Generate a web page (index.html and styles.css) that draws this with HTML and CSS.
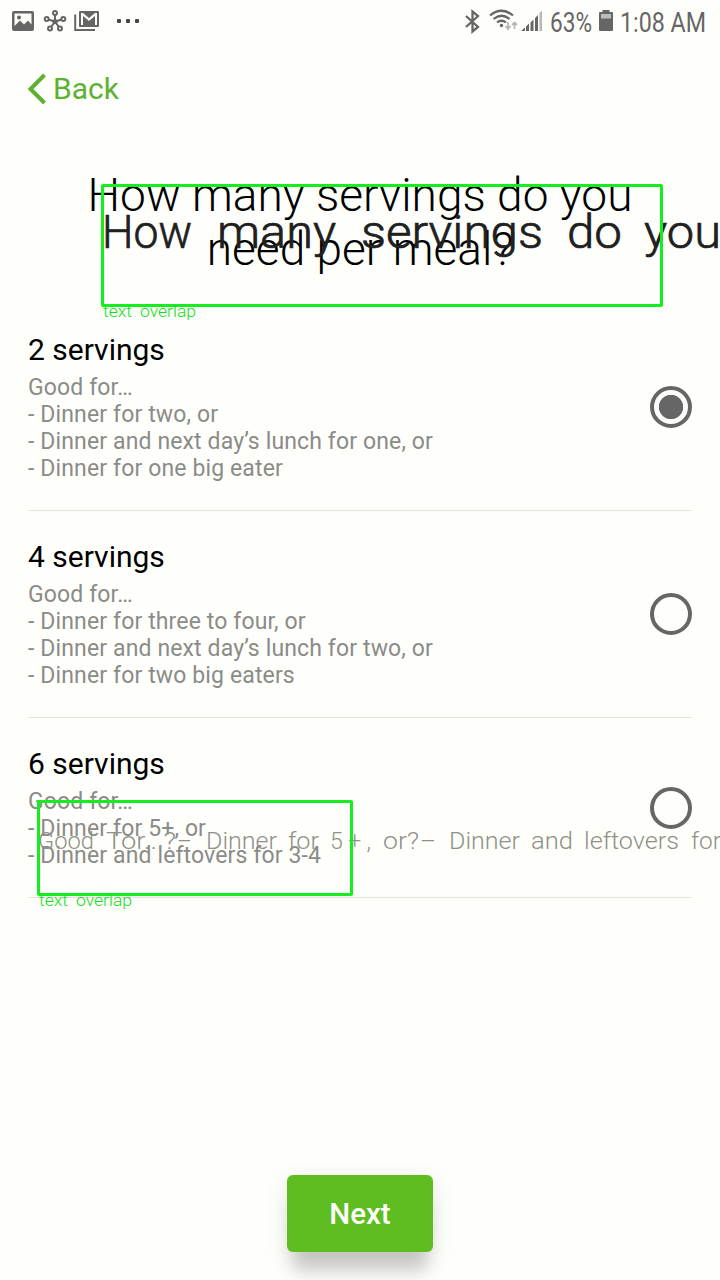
FILE: index.html
```html
<!DOCTYPE html>
<html lang="en">
<head>
<meta charset="utf-8">
<title>Servings</title>
<link rel="stylesheet" href="styles.css">
</head>
<body>
<main class="screen">
  <header class="status">
    <svg class="status-left" width="150" height="44" viewBox="0 0 150 44">
      <path fill="#666" fill-rule="evenodd" d="M14 11H32Q34 11 34 13V29Q34 31 32 31H14Q12 31 12 29V13Q12 11 14 11ZM14.500 13.500V26L20 20.500L24 24.500L28 20.500L31.500 24.500V13.500Z"/>
      <circle cx="19" cy="17.500" r="2" fill="#666"/>
      <g fill="none" stroke="#666" stroke-width="2">
        <path d="M55 15V20M48.500 19.500L53 21M61.500 19.500L57 21M51.200 26.800L54 23M58.800 26.800L56 23"/>
        <circle cx="55" cy="13" r="2"/><circle cx="46.700" cy="19" r="2"/><circle cx="63.300" cy="19" r="2"/><circle cx="50" cy="28.500" r="2"/><circle cx="60" cy="28.500" r="2"/>
        <path d="M75.200 14.500V30H95"/>
      </g>
      <circle cx="55" cy="21.500" r="2.600" fill="#666"/>
      <path fill="#666" fill-rule="evenodd" d="M80 11H98Q99 11 99 12V26Q99 27 98 27H80Q79 27 79 26V12Q79 11 80 11ZM81 13V25H83V16.500L89 21.500L95 16.500V25H97V13H95L89 18L83 13Z"/>
      <path fill="#666" d="M83 16L89 21L95 16V25.500H83Z"/>
      <g fill="#444"><rect x="117" y="19" width="4" height="4" rx="1"/><rect x="126" y="19" width="4" height="4" rx="1"/><rect x="135" y="19" width="4" height="4" rx="1"/></g>
    </svg>
    <svg class="status-right" width="260" height="44" viewBox="460 0 260 44">
      <path d="M466 16L478 27L472.500 31.500V11.500L478 16L466 27" fill="none" stroke="#666" stroke-width="2.300"/>
      <g fill="none" stroke="#666" stroke-width="2.200">
        <path d="M490 15.500Q501.500 6 513 15.500M493.500 19Q501.500 12.500 509.500 19M497 22.500Q501.500 19 506 22.500"/>
      </g>
      <circle cx="501.500" cy="25.500" r="1.700" fill="#666"/>
      <path d="M508 22V28M505.500 26L508 29L510.500 26M514.500 29V23M512 25L514.500 22.500L517 25" fill="none" stroke="#b8b8b5" stroke-width="1.800"/>
      <path fill="#666" d="M521 31L525 27.500V31ZM526 26.500L529 23.500V31H526ZM530.500 22.500L533.500 19.500V31H530.500ZM535 18L538 15V31H535Z"/>
      <path fill="#b8b8b5" d="M539.500 13L542 10.500V31H539.500Z"/>
      <text class="status-text" x="550" y="31.500" textLength="42" lengthAdjust="spacingAndGlyphs">63%</text>
      <path fill="#666" d="M602.500 10H609.500V12H612Q613 12 613 13V30Q613 31 612 31H600Q599 31 599 30V13Q599 12 600 12H602.500Z"/>
      <rect x="601" y="14" width="10" height="4.500" fill="#bdbdb9"/>
      <text class="status-text" x="620" y="31.500" textLength="86" lengthAdjust="spacingAndGlyphs">1:08 AM</text>
    </svg>
  </header>

  <nav class="back">
    <svg width="20" height="32" viewBox="0 0 20 32"><path d="M17.500 2L3.500 16L17.500 30" fill="none" stroke="#5db133" stroke-width="4"/></svg>
    <span class="back-label">Back</span>
  </nav>

  <h1 class="title">How many servings do you<br>need per meal?</h1>

  <section class="options">
    <div class="option">
      <div>
        <h2 class="option-name">2 servings</h2>
        <p class="option-info">Good for…<br>- Dinner for two, or<br>- Dinner and next day’s lunch for one, or<br>- Dinner for one big eater</p>
      </div>
      <span class="radio radio-on"></span>
    </div>
    <div class="option">
      <div>
        <h2 class="option-name">4 servings</h2>
        <p class="option-info">Good for…<br>- Dinner for three to four, or<br>- Dinner and next day’s lunch for two, or<br>- Dinner for two big eaters</p>
      </div>
      <span class="radio"></span>
    </div>
    <div class="option">
      <div>
        <h2 class="option-name">6 servings</h2>
        <p class="option-info">Good for…<br>- Dinner for 5+, or<br>- Dinner and leftovers for 3-4</p>
      </div>
      <span class="radio"></span>
    </div>
  </section>

  <footer class="footer"><button class="next">Next</button></footer>

  <svg class="annotations" width="720" height="1280" viewBox="0 0 720 1280">
    <g class="mark-title">
      <text x="102" y="247.500" textLength="90" lengthAdjust="spacingAndGlyphs">How</text>
      <text x="217" y="247.500" textLength="119" lengthAdjust="spacingAndGlyphs">many</text>
      <text x="361" y="247.500" textLength="182" lengthAdjust="spacingAndGlyphs">servings</text>
      <text x="567" y="247.500" textLength="55" lengthAdjust="spacingAndGlyphs">do</text>
      <text x="644" y="247.500" textLength="77" lengthAdjust="spacingAndGlyphs">you</text>
    </g>
    <g class="mark-info">
      <text x="38" y="848.500" textLength="56" lengthAdjust="spacingAndGlyphs">Good</text>
      <text x="106" y="848.500" textLength="70" lengthAdjust="spacingAndGlyphs">Tor...?</text>
      <text x="177" y="848.500" textLength="15" lengthAdjust="spacingAndGlyphs">–</text>
      <text x="206" y="848.500" textLength="71" lengthAdjust="spacingAndGlyphs">Dinner</text>
      <text x="288" y="848.500" textLength="31" lengthAdjust="spacingAndGlyphs">for</text>
      <text x="330" y="848.500" textLength="41" lengthAdjust="spacing">5+,</text>
      <text x="383" y="848.500" textLength="36" lengthAdjust="spacingAndGlyphs">or?</text>
      <text x="420" y="848.500" textLength="16" lengthAdjust="spacingAndGlyphs">–</text>
      <text x="449" y="848.500" textLength="71" lengthAdjust="spacingAndGlyphs">Dinner</text>
      <text x="531" y="848.500" textLength="42" lengthAdjust="spacingAndGlyphs">and</text>
      <text x="584" y="848.500" textLength="95" lengthAdjust="spacingAndGlyphs">leftovers</text>
      <text x="691" y="848.500" textLength="30" lengthAdjust="spacingAndGlyphs">for</text>
    </g>
    <rect class="mark-box" x="102.500" y="185.500" width="559" height="120" rx=".5"/>
    <rect class="mark-box" x="38.500" y="801.500" width="313" height="93" rx=".5"/>
    <g class="mark-label">
      <text x="103" y="316.500" textLength="29" lengthAdjust="spacingAndGlyphs">text</text>
      <text x="140" y="316.500" textLength="56" lengthAdjust="spacingAndGlyphs">overlap</text>
      <text x="39" y="905.500" textLength="29" lengthAdjust="spacingAndGlyphs">text</text>
      <text x="76" y="905.500" textLength="56" lengthAdjust="spacingAndGlyphs">overlap</text>
    </g>
  </svg>
</main>
</body>
</html>
```
FILE: styles.css
```css
body {
  margin: 0;
  background: #fefffb;
  font-family: Roboto, "Liberation Sans", sans-serif;
}
.screen {
  position: relative;
  display: flex;
  flex-direction: column;
  width: 720px;
  height: 1280px;
  overflow: hidden;
}
.status {
  display: flex;
  justify-content: space-between;
  height: 44px;
}
.status-text {
  font-size: 27px;
  fill: #666;
}
.back {
  display: flex;
  align-items: center;
  gap: 6px;
  height: 36px;
  margin-top: 27px;
  padding-left: 27px;
  margin-bottom: 61px;
}
.back-label {
  font-size: 30px;
  line-height: 36px;
  color: #5db133;
}
.title {
  margin: 0;
  height: 136px;
  font-size: 46px;
  font-weight: 300;
  letter-spacing: .04px;
  line-height: 54px;
  text-align: center;
  color: #000;
}
.options {
  padding: 0 28px;
}
.option {
  display: flex;
  align-items: center;
  justify-content: space-between;
  padding: 28px 0;
  border-bottom: 1px solid #e4e4dc;
}
.option-name {
  margin: 0 0 7px;
  font-size: 30px;
  font-weight: 400;
  line-height: 35px;
  color: #000;
}
.option-info {
  margin: 0;
  font-size: 23px;
  letter-spacing: .13px;
  line-height: 27px;
  color: #8b8b89;
}
.radio {
  box-sizing: border-box;
  width: 42px;
  height: 42px;
  border: 4px solid #666;
  border-radius: 50%;
}
.radio-on {
  background: radial-gradient(circle, #666 11.800px, transparent 12.500px);
}
.footer {
  display: flex;
  justify-content: center;
  margin-top: auto;
  padding-bottom: 28px;
}
.next {
  width: 146px;
  height: 77px;
  padding: 0;
  border: 0;
  border-radius: 6px;
  background: #5ebd21;
  box-shadow: 0 26px 16px -6px rgba(0, 0, 0, .17), 0 6px 24px rgba(0, 0, 0, .1);
  font: 500 29.500px Roboto, sans-serif;
  color: #fefffb;
}
.annotations {
  position: absolute;
  top: 0;
  left: 0;
}
.mark-title {
  font-size: 46px;
  font-weight: 300;
  fill: #20201e;
  stroke: #20201e;
  stroke-width: .7px;
}
.mark-info {
  font-size: 23px;
  font-weight: 300;
  fill: #909088;
}
.mark-label {
  font-size: 16px;
  font-weight: 300;
  fill: #10e020;
}
.mark-box {
  fill: none;
  stroke: #14ee1c;
  stroke-width: 3;
}
```
